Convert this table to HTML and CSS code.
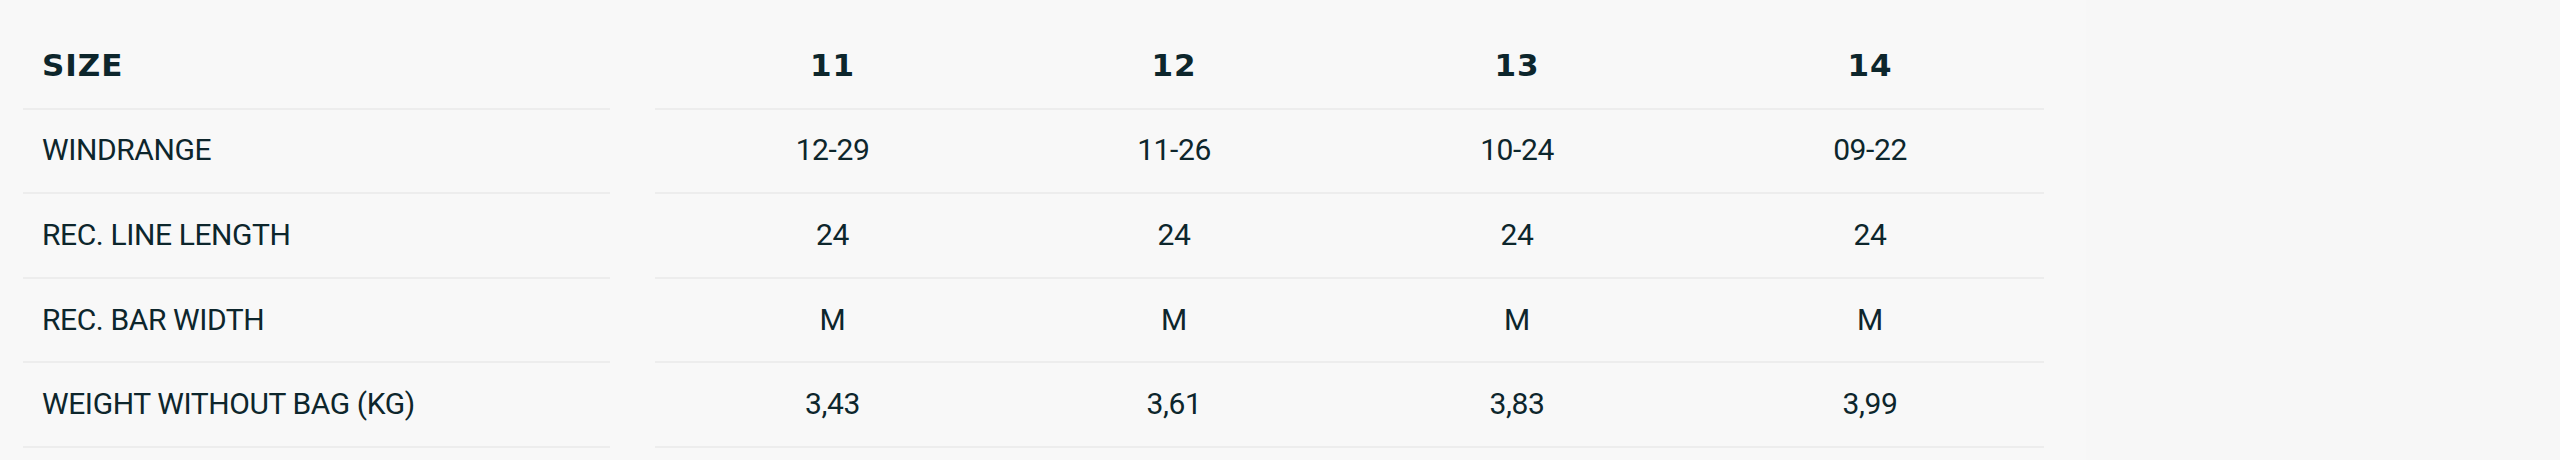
FILE: index.html
```html
<!DOCTYPE html>
<html lang="en">
<head>
<meta charset="utf-8">
<title>Size chart</title>
<link rel="stylesheet" href="styles.css">
</head>
<body>
<div class="page">
  <section class="sheet">
    <div class="labels">
      <div class="cell head label">SIZE</div>
      <div class="cell label">WINDRANGE</div>
      <div class="cell label">REC. LINE LENGTH</div>
      <div class="cell label">REC. BAR WIDTH</div>
      <div class="cell label">WEIGHT WITHOUT BAG (KG)</div>
    </div>
    <div class="values">
      <div class="cell head">11</div>
      <div class="cell head">12</div>
      <div class="cell head">13</div>
      <div class="cell head">14</div>
      <div class="cell">12-29</div>
      <div class="cell">11-26</div>
      <div class="cell">10-24</div>
      <div class="cell">09-22</div>
      <div class="cell">24</div>
      <div class="cell">24</div>
      <div class="cell">24</div>
      <div class="cell">24</div>
      <div class="cell">M</div>
      <div class="cell">M</div>
      <div class="cell">M</div>
      <div class="cell">M</div>
      <div class="cell">3,43</div>
      <div class="cell">3,61</div>
      <div class="cell">3,83</div>
      <div class="cell">3,99</div>
    </div>
  </section>
  <aside class="side"></aside>
</div>
</body>
</html>
```

FILE: styles.css
```css
html, body {
  margin: 0;
  padding: 0;
  background: #f8f8f8;
}

body {
  font-family: Roboto, "Liberation Sans", sans-serif;
  color: #0d262c;
}

.page {
  display: flex;
  width: 2560px;
  height: 460px;
  overflow: hidden;
}

.sheet {
  width: 2086px;
  flex: none;
  box-sizing: border-box;
  padding: 25px 42px 0 23px;
  display: flex;
  gap: 45px;
}

.side {
  flex: 1;
  background: #f7f7f7;
}

.labels {
  width: 587px;
  display: grid;
  grid-auto-rows: 84.6px;
  align-content: start;
}

.values {
  width: 1389px;
  display: grid;
  grid-template-columns: 355px 328px 358px 348px;
  grid-auto-rows: 84.6px;
  align-content: start;
}

.cell {
  box-sizing: border-box;
  border-bottom: 2px solid #ededed;
  display: flex;
  align-items: center;
  justify-content: center;
  font-size: 30px;
  font-weight: 400;
  letter-spacing: -0.4px;
  padding-bottom: 2px;
}

.cell.label {
  justify-content: flex-start;
  padding-left: 19px;
}

.cell.head {
  font-family: "DejaVu Sans", "Liberation Sans", sans-serif;
  font-weight: 700;
  font-size: 31px;
  letter-spacing: 1px;
}
```
